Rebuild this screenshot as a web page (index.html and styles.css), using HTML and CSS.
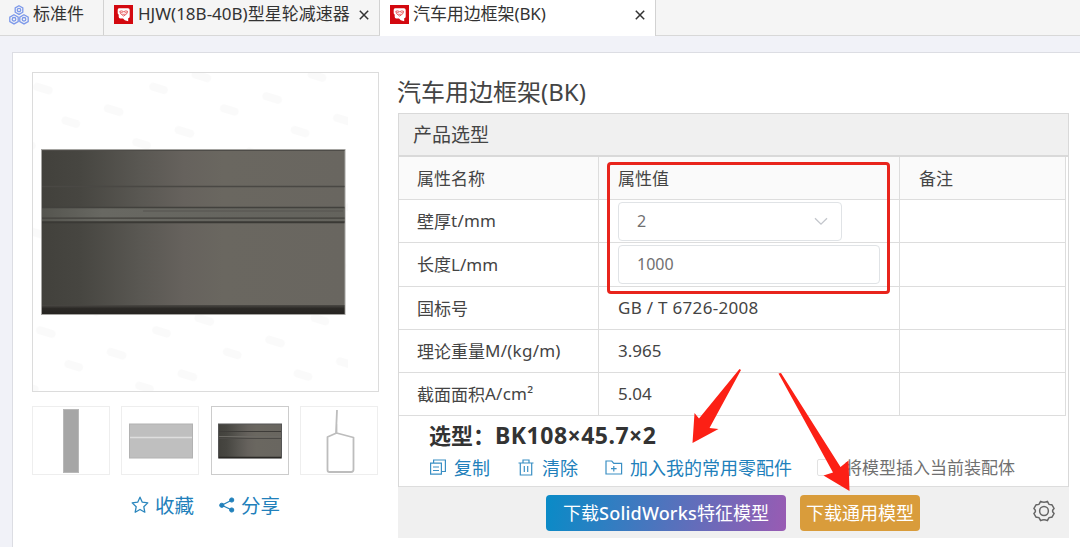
FILE: index.html
```html
<!DOCTYPE html>
<html lang="zh-CN">
<head>
  <meta charset="UTF-8">
  <meta name="viewport" content="width=device-width, initial-scale=1.0">
  <title>汽车用边框架(BK)</title>
  <link rel="stylesheet" href="styles.css">
</head>
<body>
  <!-- shared shapes -->
  <svg class="defs" width="0" height="0">
    <defs>
      <linearGradient id="steel" x1="0" x2="1" y1="0" y2="0">
        <stop offset="0" stop-color="#42413c"/>
        <stop offset=".13" stop-color="#474641"/>
        <stop offset=".32" stop-color="#595752"/>
        <stop offset=".47" stop-color="#66625d"/>
        <stop offset=".6" stop-color="#6a6760"/>
        <stop offset="1" stop-color="#696660"/>
      </linearGradient>
      <linearGradient id="steelRib" x1="0" x2="1" y1="0" y2="0">
        <stop offset="0" stop-color="#55554f"/>
        <stop offset=".2" stop-color="#686862"/>
        <stop offset="1" stop-color="#64635d"/>
      </linearGradient>
      <linearGradient id="steelEdge" x1="0" x2="0" y1="0" y2="1">
        <stop offset="0" stop-color="#4a4844"/>
        <stop offset=".4" stop-color="#2b2926"/>
        <stop offset="1" stop-color="#262421"/>
      </linearGradient>
      <symbol id="logo" viewBox="0 0 19 19">
        <rect width="19" height="19" fill="#d3080f"/>
        <path d="M5 3.300h9q1.700 0 1.700 1.700v6.500q0 1.700-1.500 1.700v3l-3.400-1-1.800-1.800H6.200q-1.500 0-1.500-1.600V9.500q-1-.3-1-1.500V5Q3.700 3.300 5 3.300z" fill="#fff"/>
        <path d="M5.800 6.300q1.800-1 3.900.4 2.100-1.400 3.900-.4.500 2.200-3.900 4.800-4.400-2.600-3.900-4.800z" fill="#fff" stroke="#e3474b" stroke-width=".9"/>
        <path d="M6.800 7.700h2M10.600 7.700h2M8.500 9.300h2.400" stroke="#e3474b" stroke-width=".8"/>
      </symbol>
      <symbol id="close" viewBox="0 0 10 10">
        <path d="M.8.8l8.400 8.400M9.200.8L.8 9.200" stroke="#333" stroke-width="1.500"/>
      </symbol>
    </defs>
  </svg>

  <nav class="tabs">
    <div class="tab tab-home">
      <svg class="icon-parts" width="20" height="20" viewBox="0 0 20 20" fill="none" stroke="#7d99ea" stroke-width="1.300">
        <path d="M10 .8l3.800 2.100v4.300L10 9.400 6.200 7.200V2.900z"/>
        <path d="M5 9.800l4.200 2.300v4.500L5 18.900.8 16.600v-4.500z"/>
        <path d="M15 9.800l4.200 2.300v4.500L15 18.900l-4.200-2.300v-4.500z"/>
        <circle cx="10" cy="5" r="1.700"/><circle cx="5" cy="14.300" r="1.800"/><circle cx="15" cy="14.300" r="1.800"/>
      </svg>
      <span class="tab-text">标准件</span>
    </div>
    <div class="tab">
      <svg width="19" height="19"><use href="#logo"/></svg>
      <span class="tab-text">HJW(18B-40B)型星轮减速器</span>
      <svg class="close" width="10" height="10"><use href="#close"/></svg>
    </div>
    <div class="tab active">
      <svg width="19" height="19"><use href="#logo"/></svg>
      <span class="tab-text">汽车用边框架(BK)</span>
      <svg class="close" width="10" height="10"><use href="#close"/></svg>
    </div>
  </nav>

  <main class="card">
    <aside class="gallery">
      <div class="preview">
        <svg width="345" height="318" viewBox="0 0 345 318">
          <defs>
            <pattern id="marks" width="74" height="58" patternUnits="userSpaceOnUse" patternTransform="rotate(17)">
              <path d="M8 12h12M45 36h11" stroke="#fafafa" stroke-width="8" stroke-linecap="round"/>
            </pattern>
          </defs>
          <rect width="315" height="318" fill="url(#marks)"/>
          <rect x="8.500" y="76.500" width="303.500" height="165" fill="url(#steel)" stroke="#a5a4a1"/>
          <path d="M9 77.500h302.500" stroke="#4e4c48"/>
          <path d="M9 113.500h302.500" stroke="#4a4844" stroke-width="1.500"/>
          <rect x="9" y="135" width="302.500" height="14" fill="url(#steelRib)"/>
          <path d="M9 134.500h302.500" stroke="#42413d" stroke-width="1.500"/>
          <path d="M110 138h200" stroke="#565550"/>
          <path d="M9 145.200h302.500" stroke="#42413d" stroke-width="1.300"/>
          <path d="M9 149.300h302.500" stroke="#3a3935" stroke-width="2"/>
          <rect x="9" y="232" width="302.500" height="9" fill="url(#steelEdge)"/>
        </svg>
      </div>
      <div class="thumbs">
        <div class="thumb">
          <svg width="76" height="67" viewBox="0 0 76 67">
            <rect x="30.500" y="2.500" width="15" height="63" fill="#a6a6a6" stroke="#b8b8b8"/>
          </svg>
        </div>
        <div class="thumb">
          <svg width="76" height="67" viewBox="0 0 76 67">
            <rect x="7.500" y="17" width="63" height="34" fill="#bfbfbf" stroke="#b2b2b2"/>
            <path d="M8 30.500h62" stroke="#dedede" stroke-width="1.600"/>
          </svg>
        </div>
        <div class="thumb selected">
          <svg width="76" height="67" viewBox="0 0 76 67">
            <rect x="6.500" y="17" width="63" height="34" fill="url(#steel)" stroke="#555"/>
            <path d="M7 24.500h62" stroke="#3e3c39"/>
            <path d="M7 31.500h62" stroke="#4b4946"/>
            <path d="M7 29.500h62" stroke="#6b6964"/>
            <path d="M7 50.500h62" stroke="#2a2825" stroke-width="1.500"/>
          </svg>
        </div>
        <div class="thumb">
          <svg width="76" height="67" viewBox="0 0 76 67" fill="none" stroke="#bdbdbd" stroke-width="1.800" stroke-linejoin="round">
            <path d="M36 3l-1 23M35.500 17v9l-9 4v33q0 2 2 2H50q2.500 0 2.500-2.500V30.500l-17-4.500"/>
          </svg>
        </div>
      </div>
      <div class="social">
        <a class="link">
          <svg width="18" height="18" viewBox="0 0 18 18" fill="none" stroke="#2a86bd" stroke-width="1.300" stroke-linejoin="round">
            <path d="M9 1.200l2.300 5 5.500.7-4 3.800 1 5.500L9 13.500l-4.800 2.700 1-5.500-4-3.800 5.500-.7z"/>
          </svg>
          <span>收藏</span>
        </a>
        <a class="link">
          <svg width="16" height="16" viewBox="0 0 16 16" fill="#2180bb" stroke="#2180bb">
            <path d="M13 3L2.800 8.300 13 13" fill="none" stroke-width="1.200"/>
            <circle cx="12.700" cy="3" r="2.100"/><circle cx="2.800" cy="8.300" r="2.100"/><circle cx="12.700" cy="13" r="2.100"/>
          </svg>
          <span>分享</span>
        </a>
      </div>
    </aside>

    <section class="detail">
      <h1>汽车用边框架(BK)</h1>
      <div class="panel">
        <div class="panel-title">产品选型</div>
        <div class="grid">
          <div class="row head"><div>属性名称</div><div>属性值</div><div>备注</div></div>
          <div class="row">
            <div>壁厚<span class="unit">t/mm</span></div>
            <div>
              <div class="field select">
                <span>2</span>
                <svg width="14" height="9" viewBox="0 0 14 9" fill="none" stroke="#c3c6cc" stroke-width="1.300"><path d="M1 1.200l6 6 6-6"/></svg>
              </div>
            </div>
            <div></div>
          </div>
          <div class="row">
            <div>长度L/mm</div>
            <div><div class="field"><span>1000</span></div></div>
            <div></div>
          </div>
          <div class="row"><div>国标号</div><div class="standard">GB / T 6726-2008</div><div></div></div>
          <div class="row"><div>理论重量<span class="unit">M/(kg/m)</span></div><div>3.965</div><div></div></div>
          <div class="row"><div>截面面积<span class="unit">A/cm²</span></div><div>5.04</div><div></div></div>
          <div class="mark-box"></div>
        </div>
        <div class="choice">
          <div class="model"><span class="model-label">选型：</span><span class="model-code">BK108×45.7×2</span></div>
          <div class="actions">
            <a class="link copy">
              <svg width="18" height="16" viewBox="0 0 18 16" fill="none" stroke="#3a8fc4" stroke-width="1.200">
                <path d="M1.600 4.200h10.800v11H1.600zM4.600 4V1h11.800v11.500h-3.700M4 8h6M4 11.500h6"/>
              </svg>
              <span>复制</span>
            </a>
            <a class="link clear">
              <svg width="16" height="17" viewBox="0 0 16 17" fill="none" stroke="#3a8fc4" stroke-width="1.200">
                <path d="M.5 4h15M5 4V1h6v3M2.300 4v12h11.400V4M6.300 7v6M9.700 7v6"/>
              </svg>
              <span>清除</span>
            </a>
            <a class="link add">
              <svg width="18" height="15" viewBox="0 0 18 15" fill="none" stroke="#3a8fc4" stroke-width="1.200">
                <path d="M1 1h5.800l2 2.400H16.600v10.600H1zM8.800 6v5.500M6 8.700h5.600"/>
              </svg>
              <span>加入我的常用零配件</span>
            </a>
            <label class="insert"><i class="check"></i><span>将模型插入当前装配体</span></label>
          </div>
        </div>
        <div class="footer">
          <a class="btn btn-sw">下载<span>SolidWorks</span>特征模型</a>
          <a class="btn btn-common">下载通用模型</a>
          <svg class="gear" width="22" height="22" viewBox="0 0 22 22" fill="none" stroke="#666" stroke-width="1.500" stroke-linejoin="round">
            <path d="M7.600 1.300Q11 3 14.400 1.300L16 4.300q.7.600 3 .5l2.100 3.700Q19.500 10 19.500 11t1.600 2.500L19 17.200q-2.300-.1-3 .5l-1.600 3Q11 19 7.600 20.700L6 17.700q-.7-.6-3-.5L.9 13.500Q2.500 12 2.500 11T.9 8.500L3 4.800q2.300.1 3-.5z"/>
            <circle cx="11" cy="11" r="4.400"/>
          </svg>
        </div>
      </div>
    </section>
  </main>

  <!-- pointers over the buttons -->
  <svg class="arrows" width="1080" height="547" viewBox="0 0 1080 547" fill="#fc2015">
    <path d="M739.500 369L741 370 709.500 428 718.500 429 692.500 443 694.500 413 699 418.500Z"/>
    <path d="M778.500 373.500L781 373 840.500 467 848.500 460.500 849.500 491 823.500 475.500 833 472.500Z"/>
  </svg>
</body>
</html>
```
FILE: styles.css
```css
* {
  margin: 0;
  padding: 0;
  box-sizing: border-box;
}

body {
  height: 547px;
  overflow: hidden;
  position: relative;
  background: #f1f2f8;
  color: #444;
  font-family: "Noto Sans", "Noto Sans CJK SC", sans-serif;
  font-size: 17px;
}

svg {
  display: block;
  flex-shrink: 0;
}

.defs {
  position: absolute;
}

/* tabs */
.tabs {
  display: flex;
  height: 36px;
  background: #f5f5f5;
  border-bottom: 1px solid #d8d8d8;
}

.tab {
  display: flex;
  width: 276px;
  height: 35px;
  padding: 5px 10px 0 10px;
  border-right: 1px solid #d2d2d2;
}

.tab-home {
  width: 104px;
  padding-left: 9px;
}

.tab-text {
  width: 214px;
  height: 26px;
  margin: -4px 0 0 5px;
  line-height: 26px;
  white-space: nowrap;
  overflow: hidden;
  color: #333;
}

.active .tab-text {
  margin-left: 4px;
  letter-spacing: -0.1px;
}

.tab-home .tab-text {
  width: auto;
  margin-left: 4px;
}

.close {
  margin: 5px 0 0 auto;
}

.active {
  height: 36px;
  background: #fff;
}

/* content */
.card {
  display: flex;
  height: 500px;
  margin: 16px -1px 0 12px;
  padding: 19px 0 0 19px;
  background: #fff;
  border: 1px solid #dcdde3;
}

.gallery {
  width: 347px;
  flex-shrink: 0;
}

.preview {
  height: 320px;
  border: 1px solid #dcdcdc;
}

.thumbs {
  display: flex;
  justify-content: space-between;
  margin: 14px 1px 0 0;
}

.thumb {
  width: 78px;
  height: 69px;
  border: 1px solid #eee;
}

.thumb.selected {
  border-color: #ccc;
}

.link {
  display: flex;
  align-items: center;
  color: #2180bb;
}

.social {
  display: flex;
  gap: 25px;
  height: 28px;
  margin-top: 16px;
  padding-left: 99px;
  font-size: 19.5px;
}

.social .link {
  gap: 6px;
}

.social span {
  margin-top: -2px;
}

.detail {
  width: 671px;
  margin-left: 19px;
}

h1 {
  height: 41px;
  margin-left: -1px;
  line-height: 40px;
  font-size: 24px;
  font-weight: normal;
  white-space: nowrap;
}

.panel {
  border: 1px solid #d9d9d9;
  border-bottom: 0;
}

.panel-title {
  height: 43px;
  padding-left: 14px;
  border-bottom: 2px solid #d9d9d9;
  background: #f0f0f0;
  line-height: 42px;
  font-size: 19px;
}

.grid {
  position: relative;
  margin-right: 2px;
}

.row {
  display: grid;
  grid-template-columns: 200px 301px 1fr;
  height: 43.200px;
  border-bottom: 1px solid #ddd;
}

.row > div {
  display: flex;
  align-items: center;
  padding: 0 0 1px 19px;
  border-right: 1px solid #ddd;
  white-space: nowrap;
}

.row > div:first-child {
  padding-left: 18px;
}

.unit {
  letter-spacing: 0.25px;
}

.standard {
  letter-spacing: 0.3px;
}

.head {
  background: #fafafa;
}

.field {
  display: flex;
  align-items: center;
  justify-content: space-between;
  width: 262px;
  height: 39px;
  margin-top: 1px;
  padding: 0 13px 0 18px;
  border: 1px solid #e0e3e6;
  border-radius: 4px;
  color: #707070;
  font-size: 16px;
}

.select {
  width: 224px;
}

/* red frame around the editable values */
.mark-box {
  position: absolute;
  left: 208px;
  top: 5px;
  width: 283px;
  height: 132px;
  border: 3px solid #e8241c;
  border-radius: 4px;
}

.choice {
  height: 71px;
  padding-left: 31px;
  border-bottom: 1px solid #ddd;
}

.model {
  display: flex;
  height: 36px;
  line-height: 39px;
  font-size: 22px;
  font-weight: bold;
  color: #333;
  white-space: nowrap;
}

.model-label {
  width: 66px;
  margin-left: -1px;
}

.model-code {
  font-size: 23px;
  letter-spacing: 0.5px;
}

.actions {
  display: flex;
  height: 30px;
  margin-left: -1px;
  font-size: 18px;
  white-space: nowrap;
}

.link.copy,
.link.add {
  gap: 7px;
}

.actions .link span {
  margin-top: -1px;
}

.link.clear {
  gap: 8px;
  margin: 0 27px 0 28px;
}

.insert {
  display: flex;
  align-items: center;
  gap: 12px;
  margin-left: 25px;
  color: #707070;
}

.insert span {
  margin: -1px 0 0 -1px;
  font-size: 17px;
}

.check {
  width: 17px;
  height: 17px;
  border: 1px solid #e2e2e2;
  border-radius: 2px;
}

.footer {
  display: flex;
  align-items: center;
  height: 51px;
  margin: 0 -1px;
  padding: 0 14px 0 148px;
  background: #f0f0f0;
}

.btn {
  width: 120px;
  height: 36px;
  border-radius: 4px;
  background: #d99c3b;
  color: #fff;
  font-size: 18px;
  line-height: 36px;
  text-align: center;
  white-space: nowrap;
}

.btn-sw {
  width: 240px;
  margin-right: 14px;
  background: linear-gradient(100deg, #098bc7, #995bb3);
}

.btn-sw span {
  font-weight: 500;
  letter-spacing: 0.2px;
}

.gear {
  margin: -3px 0 0 auto;
}

.arrows {
  position: absolute;
  left: 0;
  top: 0;
  pointer-events: none;
}
```
